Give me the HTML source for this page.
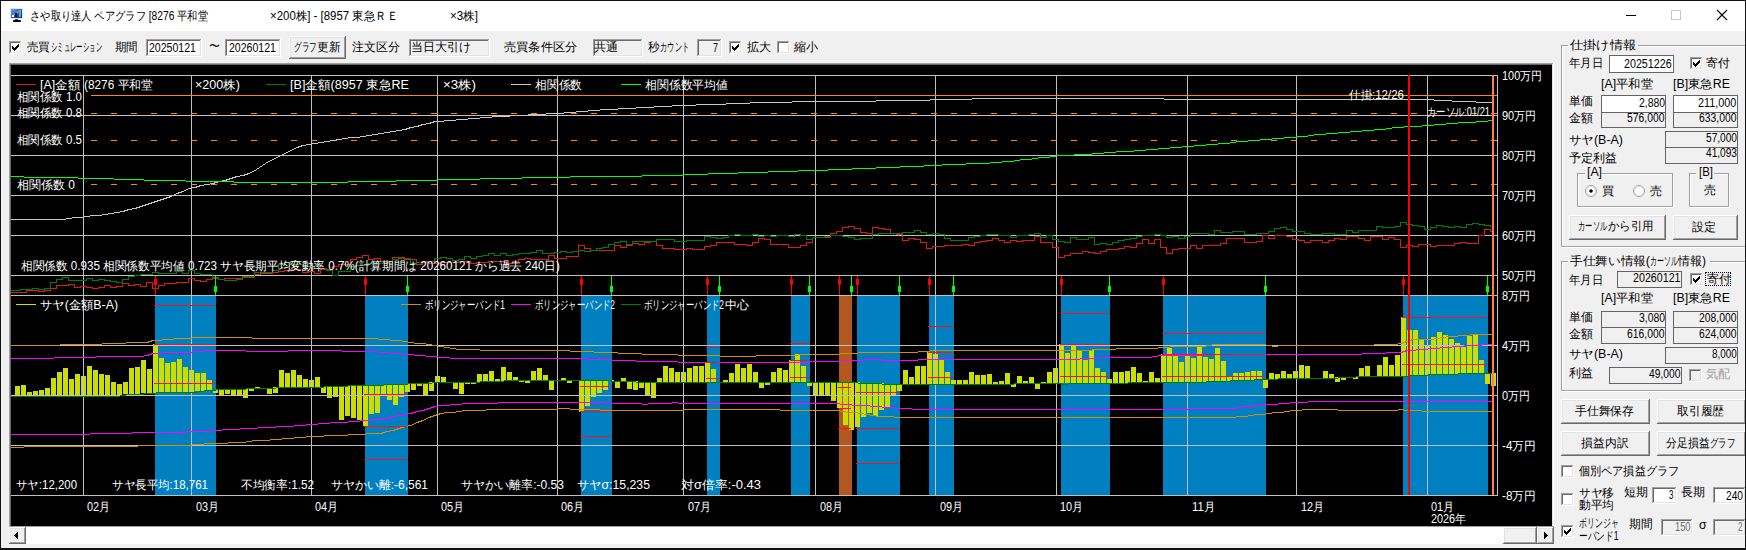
<!DOCTYPE html><html><head><meta charset="utf-8"><style>
html,body{margin:0;padding:0;width:1746px;height:550px;overflow:hidden;background:#f0f0f0}
.t{position:absolute;white-space:nowrap;font-family:"Liberation Sans",sans-serif;line-height:1;transform-origin:0 50%}
</style></head><body>
<div style="position:absolute;left:0px;top:0px;width:1746px;height:550px;background:#f0f0f0"></div>
<div style="position:absolute;left:1px;top:1px;width:1744px;height:30px;background:#fff"></div>
<div style="position:absolute;left:0px;top:0px;width:1746px;height:1px;background:#111"></div>
<div style="position:absolute;left:0px;top:0px;width:1px;height:550px;background:#111"></div>
<div style="position:absolute;left:1745px;top:0px;width:1px;height:550px;background:#111"></div>
<div style="position:absolute;left:0px;top:548px;width:1746px;height:2px;background:#111"></div>
<svg style="position:absolute;left:10px;top:8px" width="14" height="15" shape-rendering="crispEdges"><defs><linearGradient id="ig" x1="0" y1="0" x2="1" y2="1"><stop offset="0" stop-color="#5aa8ff"/><stop offset="1" stop-color="#0818a0"/></linearGradient></defs><rect x="0" y="0" width="13" height="11" fill="#e4e4e4"/><rect x="1" y="1" width="11" height="9" fill="url(#ig)"/><path d="M1.5 8.5L11 2" stroke="#f0a020" fill="none" shape-rendering="auto"/><rect x="2" y="7" width="2" height="2" fill="#fff"/><rect x="5" y="5" width="2" height="4" fill="#101830"/><rect x="9" y="2" width="2" height="7" fill="#40b8b0"/><rect x="5" y="11" width="3" height="1" fill="#555"/><rect x="3" y="12" width="8" height="2" rx="1" fill="#000" shape-rendering="auto"/></svg>
<div style="position:absolute;left:1626px;top:15px;width:10px;height:1px;background:#000"></div>
<div style="position:absolute;left:1671px;top:10px;width:10px;height:10px;border:1px solid #c8c8c8;box-sizing:border-box"></div>
<svg style="position:absolute;left:1716px;top:9px" width="12" height="12"><path d="M1 1L11 11M11 1L1 11" stroke="#000" stroke-width="1.1"/></svg>
<div style="position:absolute;left:9px;top:41px;width:13px;height:13px;background:#fff"></div>
<div style="position:absolute;left:9px;top:41px;width:12px;height:12px;background:#a0a0a0"></div>
<div style="position:absolute;left:10px;top:42px;width:11px;height:11px;background:#e3e3e3"></div>
<div style="position:absolute;left:10px;top:42px;width:10px;height:10px;background:#696969"></div>
<div style="position:absolute;left:11px;top:43px;width:9px;height:9px;background:#fff"></div>
<svg style="position:absolute;left:9px;top:41px" width="13" height="13" shape-rendering="crispEdges" fill="#000"><rect x="9" y="3" width="1" height="1"/><rect x="8" y="4" width="1" height="1"/><rect x="9" y="4" width="1" height="1"/><rect x="3" y="5" width="1" height="1"/><rect x="7" y="5" width="1" height="1"/><rect x="8" y="5" width="1" height="1"/><rect x="9" y="5" width="1" height="1"/><rect x="3" y="6" width="1" height="1"/><rect x="4" y="6" width="1" height="1"/><rect x="6" y="6" width="1" height="1"/><rect x="7" y="6" width="1" height="1"/><rect x="8" y="6" width="1" height="1"/><rect x="3" y="7" width="1" height="1"/><rect x="4" y="7" width="1" height="1"/><rect x="5" y="7" width="1" height="1"/><rect x="6" y="7" width="1" height="1"/><rect x="7" y="7" width="1" height="1"/><rect x="4" y="8" width="1" height="1"/><rect x="5" y="8" width="1" height="1"/><rect x="6" y="8" width="1" height="1"/><rect x="5" y="9" width="1" height="1"/></svg>
<div style="position:absolute;left:146px;top:39px;width:56px;height:18px;background:#fff"></div>
<div style="position:absolute;left:146px;top:39px;width:55px;height:17px;background:#a0a0a0"></div>
<div style="position:absolute;left:147px;top:40px;width:54px;height:16px;background:#e3e3e3"></div>
<div style="position:absolute;left:147px;top:40px;width:53px;height:15px;background:#696969"></div>
<div style="position:absolute;left:148px;top:41px;width:52px;height:14px;background:#fff"></div>
<div style="position:absolute;left:225px;top:39px;width:56px;height:18px;background:#fff"></div>
<div style="position:absolute;left:225px;top:39px;width:55px;height:17px;background:#a0a0a0"></div>
<div style="position:absolute;left:226px;top:40px;width:54px;height:16px;background:#e3e3e3"></div>
<div style="position:absolute;left:226px;top:40px;width:53px;height:15px;background:#696969"></div>
<div style="position:absolute;left:227px;top:41px;width:52px;height:14px;background:#fff"></div>
<div style="position:absolute;left:289px;top:36px;width:57px;height:23px;background:#696969"></div>
<div style="position:absolute;left:289px;top:36px;width:56px;height:22px;background:#fff"></div>
<div style="position:absolute;left:290px;top:37px;width:55px;height:21px;background:#a0a0a0"></div>
<div style="position:absolute;left:290px;top:37px;width:54px;height:20px;background:#e3e3e3"></div>
<div style="position:absolute;left:291px;top:38px;width:53px;height:19px;background:#f0f0f0"></div>
<div style="position:absolute;left:409px;top:39px;width:81px;height:18px;background:#fff"></div>
<div style="position:absolute;left:409px;top:39px;width:80px;height:17px;background:#a0a0a0"></div>
<div style="position:absolute;left:410px;top:40px;width:79px;height:16px;background:#e3e3e3"></div>
<div style="position:absolute;left:410px;top:40px;width:78px;height:15px;background:#696969"></div>
<div style="position:absolute;left:411px;top:41px;width:77px;height:14px;background:#f0f0f0"></div>
<div style="position:absolute;left:593px;top:39px;width:50px;height:18px;background:#fff"></div>
<div style="position:absolute;left:593px;top:39px;width:49px;height:17px;background:#a0a0a0"></div>
<div style="position:absolute;left:594px;top:40px;width:48px;height:16px;background:#e3e3e3"></div>
<div style="position:absolute;left:594px;top:40px;width:47px;height:15px;background:#696969"></div>
<div style="position:absolute;left:595px;top:41px;width:46px;height:14px;background:#f0f0f0"></div>
<div style="position:absolute;left:697px;top:39px;width:25px;height:18px;background:#fff"></div>
<div style="position:absolute;left:697px;top:39px;width:24px;height:17px;background:#a0a0a0"></div>
<div style="position:absolute;left:698px;top:40px;width:23px;height:16px;background:#e3e3e3"></div>
<div style="position:absolute;left:698px;top:40px;width:22px;height:15px;background:#696969"></div>
<div style="position:absolute;left:699px;top:41px;width:21px;height:14px;background:#f0f0f0"></div>
<div style="position:absolute;left:729px;top:41px;width:13px;height:13px;background:#fff"></div>
<div style="position:absolute;left:729px;top:41px;width:12px;height:12px;background:#a0a0a0"></div>
<div style="position:absolute;left:730px;top:42px;width:11px;height:11px;background:#e3e3e3"></div>
<div style="position:absolute;left:730px;top:42px;width:10px;height:10px;background:#696969"></div>
<div style="position:absolute;left:731px;top:43px;width:9px;height:9px;background:#fff"></div>
<svg style="position:absolute;left:729px;top:41px" width="13" height="13" shape-rendering="crispEdges" fill="#000"><rect x="9" y="3" width="1" height="1"/><rect x="8" y="4" width="1" height="1"/><rect x="9" y="4" width="1" height="1"/><rect x="3" y="5" width="1" height="1"/><rect x="7" y="5" width="1" height="1"/><rect x="8" y="5" width="1" height="1"/><rect x="9" y="5" width="1" height="1"/><rect x="3" y="6" width="1" height="1"/><rect x="4" y="6" width="1" height="1"/><rect x="6" y="6" width="1" height="1"/><rect x="7" y="6" width="1" height="1"/><rect x="8" y="6" width="1" height="1"/><rect x="3" y="7" width="1" height="1"/><rect x="4" y="7" width="1" height="1"/><rect x="5" y="7" width="1" height="1"/><rect x="6" y="7" width="1" height="1"/><rect x="7" y="7" width="1" height="1"/><rect x="4" y="8" width="1" height="1"/><rect x="5" y="8" width="1" height="1"/><rect x="6" y="8" width="1" height="1"/><rect x="5" y="9" width="1" height="1"/></svg>
<div style="position:absolute;left:777px;top:41px;width:13px;height:13px;background:#fff"></div>
<div style="position:absolute;left:777px;top:41px;width:12px;height:12px;background:#a0a0a0"></div>
<div style="position:absolute;left:778px;top:42px;width:11px;height:11px;background:#e3e3e3"></div>
<div style="position:absolute;left:778px;top:42px;width:10px;height:10px;background:#696969"></div>
<div style="position:absolute;left:779px;top:43px;width:9px;height:9px;background:#fff"></div>
<div style="position:absolute;left:9px;top:63px;width:1545px;height:465px;background:#fff"></div>
<div style="position:absolute;left:9px;top:63px;width:1544px;height:464px;background:#a0a0a0"></div>
<div style="position:absolute;left:10px;top:64px;width:1543px;height:463px;background:#e3e3e3"></div>
<div style="position:absolute;left:10px;top:64px;width:1542px;height:462px;background:#696969"></div>
<div style="position:absolute;left:11px;top:65px;width:1541px;height:461px;background:#000"></div>
<div style="position:absolute;left:9px;top:526px;width:1545px;height:18px;background:#fff"></div>
<div style="position:absolute;left:9px;top:526px;width:1545px;height:1px;background:#a0a0a0"></div>
<div style="position:absolute;left:9px;top:527px;width:1px;height:17px;background:#a0a0a0"></div>
<div style="position:absolute;left:9px;top:527px;width:17px;height:17px;background:#696969"></div>
<div style="position:absolute;left:9px;top:527px;width:16px;height:16px;background:#fff"></div>
<div style="position:absolute;left:10px;top:528px;width:15px;height:15px;background:#a0a0a0"></div>
<div style="position:absolute;left:10px;top:528px;width:14px;height:14px;background:#e3e3e3"></div>
<div style="position:absolute;left:11px;top:529px;width:13px;height:13px;background:#f0f0f0"></div>
<svg style="position:absolute;left:14px;top:532px" width="4" height="7" shape-rendering="crispEdges" fill="#000"><rect x="3" y="0" width="1" height="7"/><rect x="2" y="1" width="1" height="5"/><rect x="1" y="2" width="1" height="3"/><rect x="0" y="3" width="1" height="1"/></svg>
<div style="position:absolute;left:1503px;top:527px;width:34px;height:17px;background:#696969"></div>
<div style="position:absolute;left:1503px;top:527px;width:33px;height:16px;background:#fff"></div>
<div style="position:absolute;left:1504px;top:528px;width:32px;height:15px;background:#a0a0a0"></div>
<div style="position:absolute;left:1504px;top:528px;width:31px;height:14px;background:#e3e3e3"></div>
<div style="position:absolute;left:1505px;top:529px;width:30px;height:13px;background:#f0f0f0"></div>
<div style="position:absolute;left:1537px;top:527px;width:17px;height:17px;background:#696969"></div>
<div style="position:absolute;left:1537px;top:527px;width:16px;height:16px;background:#fff"></div>
<div style="position:absolute;left:1538px;top:528px;width:15px;height:15px;background:#a0a0a0"></div>
<div style="position:absolute;left:1538px;top:528px;width:14px;height:14px;background:#e3e3e3"></div>
<div style="position:absolute;left:1539px;top:529px;width:13px;height:13px;background:#f0f0f0"></div>
<svg style="position:absolute;left:1544px;top:532px" width="4" height="7" shape-rendering="crispEdges" fill="#000"><rect x="0" y="0" width="1" height="7"/><rect x="1" y="1" width="1" height="5"/><rect x="2" y="2" width="1" height="3"/><rect x="3" y="3" width="1" height="1"/></svg>
<div style="position:absolute;left:1561px;top:45px;width:183px;height:200px;border:1px solid #a0a0a0;box-shadow:1px 1px 0 #fff inset, 1px 1px 0 #fff"></div>
<div style="position:absolute;left:1568px;top:38px;width:70px;height:14px;background:#f0f0f0"></div>
<div style="position:absolute;left:1609px;top:55px;width:65px;height:18px;background:#fff;border:1px solid #646464;box-sizing:border-box"></div>
<div style="position:absolute;left:1690px;top:57px;width:13px;height:13px;background:#fff"></div>
<div style="position:absolute;left:1690px;top:57px;width:12px;height:12px;background:#a0a0a0"></div>
<div style="position:absolute;left:1691px;top:58px;width:11px;height:11px;background:#e3e3e3"></div>
<div style="position:absolute;left:1691px;top:58px;width:10px;height:10px;background:#696969"></div>
<div style="position:absolute;left:1692px;top:59px;width:9px;height:9px;background:#fff"></div>
<svg style="position:absolute;left:1690px;top:57px" width="13" height="13" shape-rendering="crispEdges" fill="#000"><rect x="9" y="3" width="1" height="1"/><rect x="8" y="4" width="1" height="1"/><rect x="9" y="4" width="1" height="1"/><rect x="3" y="5" width="1" height="1"/><rect x="7" y="5" width="1" height="1"/><rect x="8" y="5" width="1" height="1"/><rect x="9" y="5" width="1" height="1"/><rect x="3" y="6" width="1" height="1"/><rect x="4" y="6" width="1" height="1"/><rect x="6" y="6" width="1" height="1"/><rect x="7" y="6" width="1" height="1"/><rect x="8" y="6" width="1" height="1"/><rect x="3" y="7" width="1" height="1"/><rect x="4" y="7" width="1" height="1"/><rect x="5" y="7" width="1" height="1"/><rect x="6" y="7" width="1" height="1"/><rect x="7" y="7" width="1" height="1"/><rect x="4" y="8" width="1" height="1"/><rect x="5" y="8" width="1" height="1"/><rect x="6" y="8" width="1" height="1"/><rect x="5" y="9" width="1" height="1"/></svg>
<div style="position:absolute;left:1601px;top:95px;width:65px;height:18px;background:#fff;border:1px solid #646464;box-sizing:border-box"></div>
<div style="position:absolute;left:1601px;top:112px;width:65px;height:16px;background:#f0f0f0;border:1px solid #646464;box-sizing:border-box"></div>
<div style="position:absolute;left:1673px;top:95px;width:65px;height:18px;background:#fff;border:1px solid #646464;box-sizing:border-box"></div>
<div style="position:absolute;left:1673px;top:112px;width:65px;height:16px;background:#f0f0f0;border:1px solid #646464;box-sizing:border-box"></div>
<div style="position:absolute;left:1665px;top:131px;width:73px;height:17px;background:#f0f0f0;border:1px solid #646464;box-sizing:border-box"></div>
<div style="position:absolute;left:1665px;top:147px;width:73px;height:17px;background:#f0f0f0;border:1px solid #646464;box-sizing:border-box"></div>
<div style="position:absolute;left:1577px;top:173px;width:94px;height:32px;border:1px solid #a0a0a0;box-shadow:1px 1px 0 #fff inset, 1px 1px 0 #fff"></div>
<div style="position:absolute;left:1585px;top:167px;width:16px;height:12px;background:#f0f0f0"></div>
<div style="position:absolute;left:1689px;top:173px;width:38px;height:32px;border:1px solid #a0a0a0;box-shadow:1px 1px 0 #fff inset, 1px 1px 0 #fff"></div>
<div style="position:absolute;left:1696px;top:167px;width:18px;height:12px;background:#f0f0f0"></div>
<svg style="position:absolute;left:1585px;top:185px" width="13" height="13"><circle cx="6" cy="6" r="5.5" fill="#fff" stroke="#a0a0a0"/><circle cx="6" cy="6" r="4.5" fill="none" stroke="#e3e3e3" /><circle cx="6" cy="6" r="1.8" fill="#000"/></svg>
<svg style="position:absolute;left:1633px;top:185px" width="13" height="13"><circle cx="6" cy="6" r="5.5" fill="#fff" stroke="#a0a0a0"/><circle cx="6" cy="6" r="4.5" fill="none" stroke="#e3e3e3" /></svg>
<div style="position:absolute;left:1569px;top:215px;width:97px;height:25px;background:#696969"></div>
<div style="position:absolute;left:1569px;top:215px;width:96px;height:24px;background:#fff"></div>
<div style="position:absolute;left:1570px;top:216px;width:95px;height:23px;background:#a0a0a0"></div>
<div style="position:absolute;left:1570px;top:216px;width:94px;height:22px;background:#e3e3e3"></div>
<div style="position:absolute;left:1571px;top:217px;width:93px;height:21px;background:#f0f0f0"></div>
<div style="position:absolute;left:1673px;top:215px;width:65px;height:25px;background:#696969"></div>
<div style="position:absolute;left:1673px;top:215px;width:64px;height:24px;background:#fff"></div>
<div style="position:absolute;left:1674px;top:216px;width:63px;height:23px;background:#a0a0a0"></div>
<div style="position:absolute;left:1674px;top:216px;width:62px;height:22px;background:#e3e3e3"></div>
<div style="position:absolute;left:1675px;top:217px;width:61px;height:21px;background:#f0f0f0"></div>
<div style="position:absolute;left:1561px;top:261px;width:183px;height:128px;border:1px solid #a0a0a0;box-shadow:1px 1px 0 #fff inset, 1px 1px 0 #fff"></div>
<div style="position:absolute;left:1568px;top:254px;width:142px;height:14px;background:#f0f0f0"></div>
<div style="position:absolute;left:1617px;top:271px;width:65px;height:17px;background:#f0f0f0;border:1px solid #646464;box-sizing:border-box"></div>
<div style="position:absolute;left:1690px;top:273px;width:13px;height:13px;background:#fff"></div>
<div style="position:absolute;left:1690px;top:273px;width:12px;height:12px;background:#a0a0a0"></div>
<div style="position:absolute;left:1691px;top:274px;width:11px;height:11px;background:#e3e3e3"></div>
<div style="position:absolute;left:1691px;top:274px;width:10px;height:10px;background:#696969"></div>
<div style="position:absolute;left:1692px;top:275px;width:9px;height:9px;background:#fff"></div>
<svg style="position:absolute;left:1690px;top:273px" width="13" height="13" shape-rendering="crispEdges" fill="#000"><rect x="9" y="3" width="1" height="1"/><rect x="8" y="4" width="1" height="1"/><rect x="9" y="4" width="1" height="1"/><rect x="3" y="5" width="1" height="1"/><rect x="7" y="5" width="1" height="1"/><rect x="8" y="5" width="1" height="1"/><rect x="9" y="5" width="1" height="1"/><rect x="3" y="6" width="1" height="1"/><rect x="4" y="6" width="1" height="1"/><rect x="6" y="6" width="1" height="1"/><rect x="7" y="6" width="1" height="1"/><rect x="8" y="6" width="1" height="1"/><rect x="3" y="7" width="1" height="1"/><rect x="4" y="7" width="1" height="1"/><rect x="5" y="7" width="1" height="1"/><rect x="6" y="7" width="1" height="1"/><rect x="7" y="7" width="1" height="1"/><rect x="4" y="8" width="1" height="1"/><rect x="5" y="8" width="1" height="1"/><rect x="6" y="8" width="1" height="1"/><rect x="5" y="9" width="1" height="1"/></svg>
<div style="position:absolute;left:1705px;top:272px;width:26px;height:14px;border:1px dotted #000;box-sizing:border-box"></div>
<div style="position:absolute;left:1601px;top:311px;width:65px;height:17px;background:#f0f0f0;border:1px solid #646464;box-sizing:border-box"></div>
<div style="position:absolute;left:1601px;top:327px;width:65px;height:17px;background:#f0f0f0;border:1px solid #646464;box-sizing:border-box"></div>
<div style="position:absolute;left:1673px;top:311px;width:65px;height:17px;background:#f0f0f0;border:1px solid #646464;box-sizing:border-box"></div>
<div style="position:absolute;left:1673px;top:327px;width:65px;height:17px;background:#f0f0f0;border:1px solid #646464;box-sizing:border-box"></div>
<div style="position:absolute;left:1665px;top:347px;width:73px;height:17px;background:#f0f0f0;border:1px solid #646464;box-sizing:border-box"></div>
<div style="position:absolute;left:1609px;top:367px;width:73px;height:17px;background:#f0f0f0;border:1px solid #646464;box-sizing:border-box"></div>
<div style="position:absolute;left:1689px;top:369px;width:13px;height:13px;background:#fff"></div>
<div style="position:absolute;left:1689px;top:369px;width:12px;height:12px;background:#a0a0a0"></div>
<div style="position:absolute;left:1690px;top:370px;width:11px;height:11px;background:#e3e3e3"></div>
<div style="position:absolute;left:1690px;top:370px;width:10px;height:10px;background:#696969"></div>
<div style="position:absolute;left:1691px;top:371px;width:9px;height:9px;background:#f0f0f0"></div>
<div style="position:absolute;left:1561px;top:399px;width:89px;height:25px;background:#696969"></div>
<div style="position:absolute;left:1561px;top:399px;width:88px;height:24px;background:#fff"></div>
<div style="position:absolute;left:1562px;top:400px;width:87px;height:23px;background:#a0a0a0"></div>
<div style="position:absolute;left:1562px;top:400px;width:86px;height:22px;background:#e3e3e3"></div>
<div style="position:absolute;left:1563px;top:401px;width:85px;height:21px;background:#f0f0f0"></div>
<div style="position:absolute;left:1657px;top:399px;width:89px;height:25px;background:#696969"></div>
<div style="position:absolute;left:1657px;top:399px;width:88px;height:24px;background:#fff"></div>
<div style="position:absolute;left:1658px;top:400px;width:87px;height:23px;background:#a0a0a0"></div>
<div style="position:absolute;left:1658px;top:400px;width:86px;height:22px;background:#e3e3e3"></div>
<div style="position:absolute;left:1659px;top:401px;width:85px;height:21px;background:#f0f0f0"></div>
<div style="position:absolute;left:1561px;top:431px;width:89px;height:25px;background:#696969"></div>
<div style="position:absolute;left:1561px;top:431px;width:88px;height:24px;background:#fff"></div>
<div style="position:absolute;left:1562px;top:432px;width:87px;height:23px;background:#a0a0a0"></div>
<div style="position:absolute;left:1562px;top:432px;width:86px;height:22px;background:#e3e3e3"></div>
<div style="position:absolute;left:1563px;top:433px;width:85px;height:21px;background:#f0f0f0"></div>
<div style="position:absolute;left:1657px;top:431px;width:89px;height:25px;background:#696969"></div>
<div style="position:absolute;left:1657px;top:431px;width:88px;height:24px;background:#fff"></div>
<div style="position:absolute;left:1658px;top:432px;width:87px;height:23px;background:#a0a0a0"></div>
<div style="position:absolute;left:1658px;top:432px;width:86px;height:22px;background:#e3e3e3"></div>
<div style="position:absolute;left:1659px;top:433px;width:85px;height:21px;background:#f0f0f0"></div>
<div style="position:absolute;left:1561px;top:465px;width:13px;height:13px;background:#fff"></div>
<div style="position:absolute;left:1561px;top:465px;width:12px;height:12px;background:#a0a0a0"></div>
<div style="position:absolute;left:1562px;top:466px;width:11px;height:11px;background:#e3e3e3"></div>
<div style="position:absolute;left:1562px;top:466px;width:10px;height:10px;background:#696969"></div>
<div style="position:absolute;left:1563px;top:467px;width:9px;height:9px;background:#fff"></div>
<div style="position:absolute;left:1561px;top:493px;width:13px;height:13px;background:#fff"></div>
<div style="position:absolute;left:1561px;top:493px;width:12px;height:12px;background:#a0a0a0"></div>
<div style="position:absolute;left:1562px;top:494px;width:11px;height:11px;background:#e3e3e3"></div>
<div style="position:absolute;left:1562px;top:494px;width:10px;height:10px;background:#696969"></div>
<div style="position:absolute;left:1563px;top:495px;width:9px;height:9px;background:#fff"></div>
<div style="position:absolute;left:1652px;top:487px;width:25px;height:17px;background:#fff"></div>
<div style="position:absolute;left:1652px;top:487px;width:24px;height:16px;background:#a0a0a0"></div>
<div style="position:absolute;left:1653px;top:488px;width:23px;height:15px;background:#e3e3e3"></div>
<div style="position:absolute;left:1653px;top:488px;width:22px;height:14px;background:#696969"></div>
<div style="position:absolute;left:1654px;top:489px;width:21px;height:13px;background:#fff"></div>
<div style="position:absolute;left:1713px;top:487px;width:33px;height:17px;background:#fff"></div>
<div style="position:absolute;left:1713px;top:487px;width:32px;height:16px;background:#a0a0a0"></div>
<div style="position:absolute;left:1714px;top:488px;width:31px;height:15px;background:#e3e3e3"></div>
<div style="position:absolute;left:1714px;top:488px;width:30px;height:14px;background:#696969"></div>
<div style="position:absolute;left:1715px;top:489px;width:29px;height:13px;background:#fff"></div>
<div style="position:absolute;left:1561px;top:525px;width:13px;height:13px;background:#fff"></div>
<div style="position:absolute;left:1561px;top:525px;width:12px;height:12px;background:#a0a0a0"></div>
<div style="position:absolute;left:1562px;top:526px;width:11px;height:11px;background:#e3e3e3"></div>
<div style="position:absolute;left:1562px;top:526px;width:10px;height:10px;background:#696969"></div>
<div style="position:absolute;left:1563px;top:527px;width:9px;height:9px;background:#fff"></div>
<svg style="position:absolute;left:1561px;top:525px" width="13" height="13" shape-rendering="crispEdges" fill="#000"><rect x="9" y="3" width="1" height="1"/><rect x="8" y="4" width="1" height="1"/><rect x="9" y="4" width="1" height="1"/><rect x="3" y="5" width="1" height="1"/><rect x="7" y="5" width="1" height="1"/><rect x="8" y="5" width="1" height="1"/><rect x="9" y="5" width="1" height="1"/><rect x="3" y="6" width="1" height="1"/><rect x="4" y="6" width="1" height="1"/><rect x="6" y="6" width="1" height="1"/><rect x="7" y="6" width="1" height="1"/><rect x="8" y="6" width="1" height="1"/><rect x="3" y="7" width="1" height="1"/><rect x="4" y="7" width="1" height="1"/><rect x="5" y="7" width="1" height="1"/><rect x="6" y="7" width="1" height="1"/><rect x="7" y="7" width="1" height="1"/><rect x="4" y="8" width="1" height="1"/><rect x="5" y="8" width="1" height="1"/><rect x="6" y="8" width="1" height="1"/><rect x="5" y="9" width="1" height="1"/></svg>
<div style="position:absolute;left:1661px;top:519px;width:32px;height:17px;background:#fff"></div>
<div style="position:absolute;left:1661px;top:519px;width:31px;height:16px;background:#a0a0a0"></div>
<div style="position:absolute;left:1662px;top:520px;width:30px;height:15px;background:#e3e3e3"></div>
<div style="position:absolute;left:1662px;top:520px;width:29px;height:14px;background:#696969"></div>
<div style="position:absolute;left:1663px;top:521px;width:28px;height:13px;background:#f0f0f0"></div>
<div style="position:absolute;left:1713px;top:519px;width:33px;height:17px;background:#fff"></div>
<div style="position:absolute;left:1713px;top:519px;width:32px;height:16px;background:#a0a0a0"></div>
<div style="position:absolute;left:1714px;top:520px;width:31px;height:15px;background:#e3e3e3"></div>
<div style="position:absolute;left:1714px;top:520px;width:30px;height:14px;background:#696969"></div>
<div style="position:absolute;left:1715px;top:521px;width:29px;height:13px;background:#f0f0f0"></div>
<div style="position:absolute;left:1745px;top:0px;width:1px;height:550px;background:#111"></div>
<svg class="chart" width="1746" height="550" viewBox="0 0 1746 550" shape-rendering="crispEdges" style="position:absolute;left:0;top:0"><path d="M11 75.5H1498" stroke="#c0c0c0"/><path d="M11 115.5H1498" stroke="#c0c0c0"/><path d="M11 155.5H1498" stroke="#c0c0c0"/><path d="M11 195.5H1498" stroke="#c0c0c0"/><path d="M11 235.5H1498" stroke="#c0c0c0"/><path d="M11 275.5H1498" stroke="#c0c0c0"/><path d="M83.5 75V295" stroke="#c0c0c0"/><path d="M191.5 75V295" stroke="#c0c0c0"/><path d="M311.5 75V295" stroke="#c0c0c0"/><path d="M437.5 75V295" stroke="#c0c0c0"/><path d="M557.5 75V295" stroke="#c0c0c0"/><path d="M683.5 75V295" stroke="#c0c0c0"/><path d="M815.5 75V295" stroke="#c0c0c0"/><path d="M935.5 75V295" stroke="#c0c0c0"/><path d="M1056.5 75V295" stroke="#c0c0c0"/><path d="M1187.5 75V295" stroke="#c0c0c0"/><path d="M1296.5 75V295" stroke="#c0c0c0"/><path d="M1427.5 75V295" stroke="#c0c0c0"/><path d="M91 95.5H1497" stroke="#ff8c00"/><path d="M91 113.5H1497" stroke="#ff8c00" stroke-dasharray="6 14"/><path d="M91 140.5H1497" stroke="#ff8c00" stroke-dasharray="6 14"/><path d="M91 184.5H1497" stroke="#ff8c00" stroke-dasharray="6 14"/><path d="M11 219.5L15 219.5L21 219.5L27 219.5L33 219.5L39 219.5L45 219.5L51 219.5L57 219.5L63 219.5L69 218.5L75 217.5L81 217.5L87 216.5L93 215.5L99 215.5L105 214.5L111 213.5L117 212.5L123 211.5L129 209.5L135 208.5L141 206.5L147 204.5L153 202.5L159 200.5L165 198.5L171 196.5L177 193.5L183 191.5L189 188.5L195 187.5L201 185.5L207 184.5L213 183.5L219 181.5L225 180.5L231 178.5L237 176.5L243 175.5L249 173.5L255 170.5L261 166.5L267 162.5L273 159.5L279 156.5L285 153.5L291 150.5L297 147.5L303 145.5L309 144.5L315 143.5L321 142.5L327 141.5L333 140.5L339 139.5L345 138.5L351 137.5L357 137.5L363 136.5L369 135.5L375 134.5L381 133.5L387 132.5L393 131.5L399 130.5L405 129.5L411 127.5L417 126.5L423 124.5L429 123.5L435 121.5L441 121.5L447 120.5L453 120.5L459 119.5L465 119.5L471 118.5L477 118.5L483 117.5L489 117.5L495 116.5L501 116.5L507 116.5L513 115.5L519 115.5L525 115.5L531 114.5L537 114.5L543 114.5L549 113.5L555 113.5L561 113.5L567 112.5L573 112.5L579 111.5L585 111.5L591 110.5L597 110.5L603 109.5L609 109.5L615 109.5L621 108.5L627 108.5L633 108.5L639 107.5L645 107.5L651 107.5L657 106.5L663 106.5L669 106.5L675 105.5L681 105.5L687 105.5L693 105.5L699 104.5L705 104.5L711 104.5L717 104.5L723 104.5L729 103.5L735 103.5L741 103.5L747 103.5L753 102.5L759 102.5L765 102.5L771 102.5L777 102.5L783 102.5L789 102.5L795 101.5L801 101.5L807 101.5L813 101.5L819 101.5L825 101.5L831 101.5L837 101.5L843 101.5L849 101.5L855 101.5L861 101.5L867 101.5L873 101.5L879 100.5L885 100.5L891 100.5L897 100.5L903 100.5L909 100.5L915 100.5L921 100.5L927 100.5L933 99.5L939 99.5L945 99.5L951 99.5L957 99.5L963 99.5L969 99.5L975 98.5L981 98.5L987 98.5L993 98.5L999 98.5L1005 98.5L1011 98.5L1017 98.5L1023 98.5L1029 98.5L1035 98.5L1041 98.5L1047 98.5L1053 98.5L1059 98.5L1065 98.5L1071 98.5L1077 98.5L1083 98.5L1089 98.5L1095 98.5L1101 98.5L1107 98.5L1113 98.5L1119 98.5L1125 98.5L1131 98.5L1137 98.5L1143 98.5L1149 98.5L1155 98.5L1161 98.5L1167 99.5L1173 99.5L1179 99.5L1185 99.5L1191 99.5L1197 99.5L1203 99.5L1209 99.5L1215 99.5L1221 99.5L1227 99.5L1233 99.5L1239 99.5L1245 99.5L1251 99.5L1257 99.5L1263 99.5L1269 99.5L1275 99.5L1281 99.5L1287 99.5L1293 99.5L1299 99.5L1305 99.5L1311 99.5L1317 99.5L1323 99.5L1329 99.5L1335 99.5L1341 99.5L1347 99.5L1353 99.5L1359 99.5L1365 99.5L1371 99.5L1377 99.5L1383 99.5L1389 99.5L1395 99.5L1401 99.5L1407 99.5L1413 99.5L1419 99.5L1425 99.5L1431 99.5L1437 100.5L1443 100.5L1449 100.5L1455 101.5L1461 101.5L1467 101.5L1473 101.5L1479 102.5L1485 102.5L1491 102.5L1494 102.5" stroke="#c8c8c8" fill="none"/><path d="M11 176.5L15 176.5L21 176.5L27 177.5L33 177.5L39 177.5L45 177.5L51 177.5L57 177.5L63 177.5L69 177.5L75 177.5L81 178.5L87 178.5L93 178.5L99 178.5L105 178.5L111 178.5L117 179.5L123 179.5L129 179.5L135 179.5L141 179.5L147 180.5L153 180.5L159 180.5L165 180.5L171 180.5L177 180.5L183 180.5L189 181.5L195 181.5L201 181.5L207 181.5L213 181.5L219 181.5L225 181.5L231 181.5L237 182.5L243 182.5L249 182.5L255 182.5L261 182.5L267 182.5L273 182.5L279 182.5L285 182.5L291 182.5L297 182.5L303 182.5L309 182.5L315 182.5L321 182.5L327 182.5L333 182.5L339 182.5L345 182.5L351 181.5L357 181.5L363 181.5L369 181.5L375 181.5L381 181.5L387 181.5L393 181.5L399 180.5L405 180.5L411 180.5L417 180.5L423 180.5L429 180.5L435 180.5L441 179.5L447 179.5L453 179.5L459 179.5L465 179.5L471 179.5L477 179.5L483 178.5L489 178.5L495 178.5L501 178.5L507 178.5L513 178.5L519 178.5L525 177.5L531 177.5L537 177.5L543 177.5L549 177.5L555 177.5L561 177.5L567 177.5L573 176.5L579 176.5L585 176.5L591 176.5L597 176.5L603 176.5L609 176.5L615 176.5L621 176.5L627 176.5L633 176.5L639 176.5L645 175.5L651 175.5L657 175.5L663 175.5L669 175.5L675 175.5L681 175.5L687 174.5L693 174.5L699 174.5L705 174.5L711 173.5L717 173.5L723 173.5L729 173.5L735 173.5L741 172.5L747 172.5L753 172.5L759 172.5L765 172.5L771 171.5L777 171.5L783 171.5L789 171.5L795 171.5L801 170.5L807 170.5L813 170.5L819 170.5L825 170.5L831 169.5L837 169.5L843 169.5L849 169.5L855 168.5L861 168.5L867 168.5L873 168.5L879 167.5L885 167.5L891 167.5L897 167.5L903 166.5L909 166.5L915 166.5L921 166.5L927 165.5L933 165.5L939 165.5L945 164.5L951 164.5L957 164.5L963 164.5L969 163.5L975 163.5L981 163.5L987 163.5L993 162.5L999 162.5L1005 161.5L1011 161.5L1017 160.5L1023 159.5L1029 159.5L1035 158.5L1041 157.5L1047 157.5L1053 156.5L1059 155.5L1065 155.5L1071 155.5L1077 154.5L1083 154.5L1089 154.5L1095 153.5L1101 153.5L1107 152.5L1113 152.5L1119 151.5L1125 151.5L1131 151.5L1137 150.5L1143 150.5L1149 149.5L1155 149.5L1161 148.5L1167 148.5L1173 147.5L1179 147.5L1185 146.5L1191 146.5L1197 145.5L1203 145.5L1209 144.5L1215 144.5L1221 143.5L1227 143.5L1233 142.5L1239 141.5L1245 141.5L1251 140.5L1257 140.5L1263 139.5L1269 139.5L1275 138.5L1281 138.5L1287 137.5L1293 137.5L1299 136.5L1305 136.5L1311 135.5L1317 134.5L1323 134.5L1329 133.5L1335 133.5L1341 132.5L1347 132.5L1353 131.5L1359 131.5L1365 130.5L1371 130.5L1377 129.5L1383 129.5L1389 128.5L1395 127.5L1401 127.5L1407 126.5L1413 126.5L1419 126.5L1425 125.5L1431 125.5L1437 124.5L1443 124.5L1449 123.5L1455 123.5L1461 122.5L1467 122.5L1473 122.5L1479 121.5L1485 121.5L1491 120.5L1494 120.5" stroke="#00ff00" fill="none"/><path d="M11 292.5H26V290.5H38V291.5H44V290.5H50V288.5H56V285.5H68V284.5H74V287.5H80V286.5H86V287.5H92V288.5H98V287.5H104V285.5H110V287.5H116V286.5H122V283.5H128V285.5H134V284.5H140V286.5H146V282.5H152V288.5H158V285.5H164V283.5H176V282.5H188V278.5H194V280.5H200V281.5H206V279.5H212V278.5H218V279.5H224V278.5H242V276.5H248V277.5H254V274.5H260V273.5H272V272.5H278V271.5H284V270.5H290V269.5H302V272.5H308V271.5H314V273.5H320V269.5H332V266.5H338V264.5H350V259.5H356V257.5H362V255.5H368V259.5H374V258.5H380V261.5H392V257.5H404V259.5H410V259.5H416V264.5H422V262.5H428V263.5H440V262.5H458V261.5H470V263.5H476V262.5H488V261.5H506V263.5H512V261.5H518V259.5H524V258.5H530V259.5H548V255.5H554V258.5H566V256.5H578V245.5H584V248.5H590V250.5H614V245.5H620V247.5H626V245.5H632V243.5H638V244.5H644V242.5H650V241.5H656V245.5H662V248.5H674V249.5H686V248.5H692V249.5H704V246.5H710V245.5H716V242.5H734V244.5H746V245.5H752V242.5H758V238.5H764V239.5H770V244.5H788V247.5H800V245.5H806V242.5H812V237.5H830V233.5H836V231.5H842V227.5H848V226.5H854V228.5H860V232.5H866V233.5H872V227.5H878V228.5H884V229.5H890V233.5H896V234.5H902V240.5H908V238.5H914V239.5H920V242.5H926V248.5H932V246.5H944V245.5H962V244.5H968V245.5H974V242.5H980V241.5H986V240.5H992V238.5H998V240.5H1004V242.5H1010V240.5H1016V241.5H1022V240.5H1034V236.5H1040V242.5H1052V247.5H1058V257.5H1064V255.5H1070V253.5H1082V251.5H1088V252.5H1094V253.5H1100V251.5H1106V249.5H1118V248.5H1124V246.5H1130V247.5H1136V243.5H1142V239.5H1148V243.5H1154V239.5H1160V247.5H1166V253.5H1172V249.5H1178V248.5H1190V245.5H1196V248.5H1202V245.5H1220V243.5H1226V238.5H1244V242.5H1256V241.5H1262V235.5H1268V238.5H1274V235.5H1286V236.5H1292V239.5H1298V240.5H1304V242.5H1310V240.5H1322V242.5H1328V240.5H1334V238.5H1340V239.5H1346V236.5H1358V238.5H1364V240.5H1370V236.5H1382V239.5H1388V237.5H1394V239.5H1400V247.5H1406V245.5H1412V246.5H1418V244.5H1430V246.5H1436V245.5H1454V243.5H1460V242.5H1466V243.5H1478V235.5H1484V229.5H1490V231.5H1494" stroke="#e01818" fill="none"/><path d="M11 290.5H20V289.5H32V288.5H38V289.5H44V288.5H50V282.5H56V279.5H62V277.5H68V280.5H86V278.5H92V280.5H98V279.5H104V280.5H110V281.5H116V282.5H122V279.5H128V276.5H134V275.5H140V274.5H152V272.5H158V273.5H176V271.5H182V273.5H188V270.5H194V273.5H200V274.5H212V277.5H218V279.5H224V280.5H230V280.5H236V279.5H242V277.5H248V276.5H254V272.5H266V272.5H272V270.5H278V264.5H284V262.5H290V264.5H302V266.5H314V268.5H326V270.5H332V275.5H338V271.5H350V266.5H356V265.5H368V263.5H392V259.5H398V258.5H410V263.5H416V262.5H422V261.5H434V258.5H440V257.5H446V258.5H452V260.5H458V259.5H464V256.5H470V258.5H476V256.5H482V255.5H488V253.5H494V255.5H500V253.5H506V255.5H512V254.5H518V253.5H530V252.5H536V250.5H542V253.5H554V252.5H560V251.5H566V252.5H572V251.5H578V250.5H584V251.5H590V250.5H596V248.5H602V247.5H608V244.5H614V242.5H620V241.5H626V244.5H632V241.5H656V239.5H674V241.5H686V240.5H704V236.5H710V237.5H716V238.5H722V237.5H728V235.5H734V234.5H740V235.5H752V234.5H758V236.5H764V235.5H770V236.5H776V235.5H788V236.5H794V234.5H800V235.5H806V239.5H812V237.5H824V236.5H830V235.5H842V236.5H848V237.5H854V239.5H860V238.5H872V234.5H878V233.5H902V232.5H914V230.5H920V232.5H926V234.5H932V233.5H938V234.5H944V238.5H950V240.5H968V237.5H974V236.5H980V235.5H986V234.5H998V235.5H1010V237.5H1016V235.5H1028V234.5H1034V233.5H1040V237.5H1046V235.5H1052V239.5H1058V241.5H1064V242.5H1070V237.5H1076V239.5H1088V237.5H1094V244.5H1100V243.5H1106V244.5H1112V242.5H1118V240.5H1124V239.5H1130V238.5H1136V236.5H1142V235.5H1154V234.5H1160V235.5H1166V237.5H1172V236.5H1178V238.5H1184V236.5H1190V233.5H1208V234.5H1214V230.5H1220V232.5H1232V231.5H1244V234.5H1256V233.5H1268V231.5H1274V228.5H1280V227.5H1286V229.5H1292V231.5H1304V233.5H1310V234.5H1322V233.5H1334V234.5H1346V230.5H1352V232.5H1358V230.5H1376V226.5H1382V227.5H1394V226.5H1400V222.5H1406V224.5H1412V225.5H1418V226.5H1424V229.5H1430V227.5H1436V225.5H1442V226.5H1448V227.5H1454V226.5H1460V227.5H1466V224.5H1472V223.5H1478V224.5H1484V225.5H1490V226.5H1494" stroke="#008000" fill="none"/><rect x="155" y="296" width="61" height="199" fill="#0080c0"/><rect x="365" y="296" width="43" height="199" fill="#0080c0"/><rect x="581" y="296" width="31" height="199" fill="#0080c0"/><rect x="707" y="296" width="13" height="199" fill="#0080c0"/><rect x="791" y="296" width="19" height="199" fill="#0080c0"/><rect x="839" y="296" width="13" height="199" fill="#b05820"/><rect x="857" y="296" width="43" height="199" fill="#0080c0"/><rect x="929" y="296" width="25" height="199" fill="#0080c0"/><rect x="1061" y="296" width="49" height="199" fill="#0080c0"/><rect x="1163" y="296" width="103" height="199" fill="#0080c0"/><rect x="1403" y="296" width="85" height="199" fill="#0080c0"/><path d="M15 386h5V396h-5zM21 385h5V396h-5zM27 392h5V396h-5zM33 391h5V396h-5zM39 390h5V396h-5zM45 388h5V396h-5zM51 378h5V396h-5zM57 372h5V396h-5zM63 368h5V396h-5zM69 379h5V396h-5zM75 374h5V396h-5zM81 376h5V396h-5zM87 366h5V396h-5zM93 370h5V396h-5zM99 374h5V396h-5zM105 375h5V396h-5zM111 382h5V396h-5zM117 384h5V396h-5zM123 382h5V394h-5zM129 368h5V394h-5zM135 367h5V394h-5zM141 360h5V393h-5zM147 369h5V393h-5zM153 344h5V393h-5zM159 358h5V392h-5zM165 363h5V392h-5zM171 362h5V392h-5zM177 359h5V392h-5zM183 367h5V392h-5zM189 370h5V392h-5zM195 373h5V391h-5zM201 373h5V391h-5zM207 380h5V390h-5zM213 390h5V393h-5zM219 389h5V396h-5zM225 389h5V394h-5zM231 389h5V396h-5zM237 389h5V395h-5zM243 389h5V398h-5zM249 388h5V391h-5zM255 387h5V388h-5zM267 388h5V394h-5zM273 387h5V393h-5zM279 370h5V387h-5zM285 373h5V387h-5zM291 370h5V387h-5zM297 375h5V387h-5zM303 379h5V387h-5zM309 380h5V387h-5zM315 377h5V387h-5zM321 387h5V393h-5zM327 386h5V398h-5zM333 386h5V397h-5zM339 386h5V420h-5zM345 386h5V416h-5zM351 385h5V418h-5zM357 385h5V420h-5zM363 385h5V426h-5zM369 385h5V414h-5zM375 385h5V413h-5zM381 385h5V394h-5zM387 384h5V400h-5zM393 384h5V405h-5zM399 384h5V397h-5zM405 384h5V392h-5zM411 383h5V390h-5zM417 383h5V386h-5zM423 383h5V395h-5zM429 382h5V391h-5zM435 376h5V382h-5zM441 377h5V382h-5zM447 382h5V383h-5zM453 382h5V389h-5zM459 382h5V394h-5zM465 382h5V384h-5zM471 382h5V384h-5zM477 374h5V382h-5zM483 374h5V381h-5zM489 371h5V381h-5zM495 379h5V381h-5zM501 367h5V381h-5zM507 372h5V380h-5zM513 377h5V380h-5zM519 380h5V382h-5zM525 380h5V383h-5zM531 371h5V380h-5zM537 368h5V380h-5zM543 375h5V380h-5zM549 380h5V390h-5zM561 378h5V380h-5zM567 380h5V383h-5zM579 380h5V412h-5zM585 380h5V406h-5zM591 380h5V397h-5zM597 380h5V393h-5zM603 380h5V390h-5zM609 380h5V381h-5zM615 381h5V388h-5zM621 378h5V381h-5zM627 381h5V389h-5zM633 381h5V390h-5zM639 382h5V388h-5zM645 382h5V395h-5zM651 382h5V398h-5zM657 378h5V382h-5zM663 366h5V382h-5zM669 368h5V382h-5zM675 372h5V382h-5zM681 372h5V382h-5zM687 368h5V382h-5zM693 366h5V382h-5zM699 366h5V382h-5zM705 363h5V382h-5zM711 369h5V382h-5zM723 380h5V382h-5zM729 373h5V382h-5zM735 364h5V382h-5zM741 368h5V382h-5zM747 364h5V382h-5zM753 372h5V382h-5zM759 382h5V388h-5zM765 382h5V385h-5zM771 372h5V382h-5zM777 368h5V382h-5zM783 370h5V382h-5zM789 360h5V382h-5zM795 354h5V382h-5zM801 366h5V382h-5zM807 382h5V386h-5zM813 382h5V395h-5zM819 382h5V395h-5zM825 382h5V395h-5zM831 382h5V401h-5zM837 382h5V408h-5zM843 382h5V425h-5zM849 382h5V430h-5zM855 382h5V427h-5zM861 383h5V417h-5zM867 383h5V413h-5zM873 383h5V416h-5zM879 383h5V410h-5zM885 384h5V408h-5zM891 384h5V395h-5zM897 384h5V391h-5zM903 370h5V384h-5zM909 377h5V384h-5zM915 366h5V384h-5zM921 366h5V384h-5zM927 352h5V384h-5zM933 354h5V384h-5zM939 359h5V384h-5zM945 372h5V384h-5zM951 380h5V384h-5zM957 380h5V384h-5zM963 380h5V384h-5zM969 372h5V384h-5zM975 375h5V384h-5zM981 375h5V384h-5zM987 374h5V384h-5zM993 382h5V384h-5zM999 381h5V384h-5zM1005 373h5V384h-5zM1011 384h5V387h-5zM1017 376h5V383h-5zM1023 381h5V383h-5zM1029 377h5V383h-5zM1035 383h5V389h-5zM1041 382h5V383h-5zM1047 372h5V383h-5zM1053 368h5V383h-5zM1059 344h5V383h-5zM1065 353h5V383h-5zM1071 346h5V383h-5zM1077 350h5V383h-5zM1083 360h5V383h-5zM1089 350h5V383h-5zM1095 368h5V383h-5zM1101 372h5V383h-5zM1107 379h5V383h-5zM1113 372h5V383h-5zM1119 372h5V383h-5zM1125 371h5V383h-5zM1131 367h5V382h-5zM1137 373h5V382h-5zM1143 381h5V382h-5zM1149 372h5V382h-5zM1155 378h5V382h-5zM1161 354h5V382h-5zM1167 348h5V382h-5zM1173 356h5V382h-5zM1179 362h5V382h-5zM1185 356h5V382h-5zM1191 358h5V382h-5zM1197 346h5V382h-5zM1203 357h5V382h-5zM1209 359h5V381h-5zM1215 348h5V381h-5zM1221 361h5V381h-5zM1227 377h5V381h-5zM1233 373h5V380h-5zM1239 373h5V380h-5zM1245 372h5V380h-5zM1251 371h5V380h-5zM1257 371h5V379h-5zM1263 379h5V388h-5zM1269 373h5V379h-5zM1275 374h5V379h-5zM1281 371h5V378h-5zM1287 374h5V378h-5zM1293 371h5V378h-5zM1299 365h5V378h-5zM1305 366h5V378h-5zM1323 371h5V378h-5zM1329 374h5V378h-5zM1335 377h5V382h-5zM1341 377h5V380h-5zM1347 377h5V378h-5zM1353 377h5V379h-5zM1359 368h5V376h-5zM1365 366h5V376h-5zM1377 365h5V376h-5zM1383 357h5V376h-5zM1389 365h5V376h-5zM1395 355h5V376h-5zM1401 317h5V376h-5zM1407 330h5V376h-5zM1413 330h5V375h-5zM1419 340h5V375h-5zM1425 346h5V375h-5zM1431 337h5V374h-5zM1437 332h5V374h-5zM1443 335h5V374h-5zM1449 339h5V374h-5zM1455 343h5V374h-5zM1461 347h5V373h-5zM1467 336h5V373h-5zM1473 334h5V373h-5zM1479 360h5V373h-5zM1485 373h5V384h-5zM1491 373h5V386h-5z" fill="#ccdd00"/><path d="M11 295.5H1498" stroke="#c0c0c0"/><path d="M11 345.5H1498" stroke="#c0c0c0"/><path d="M11 395.5H1498" stroke="#c0c0c0"/><path d="M11 445.5H1498" stroke="#c0c0c0"/><path d="M11 495.5H1498" stroke="#c0c0c0"/><path d="M83.5 295V495" stroke="#c0c0c0"/><path d="M191.5 295V495" stroke="#c0c0c0"/><path d="M311.5 295V495" stroke="#c0c0c0"/><path d="M437.5 295V495" stroke="#c0c0c0"/><path d="M557.5 295V495" stroke="#c0c0c0"/><path d="M683.5 295V495" stroke="#c0c0c0"/><path d="M815.5 295V495" stroke="#c0c0c0"/><path d="M935.5 295V495" stroke="#c0c0c0"/><path d="M1056.5 295V495" stroke="#c0c0c0"/><path d="M1187.5 295V495" stroke="#c0c0c0"/><path d="M1296.5 295V495" stroke="#c0c0c0"/><path d="M1427.5 295V495" stroke="#c0c0c0"/><path d="M1497.5 75V496" stroke="#c0c0c0"/><path d="M11 345.5L15 345.5L21 345.5L27 345.5L33 345.5L39 345.5L45 345.5L51 345.5L57 345.5L63 344.5L69 344.5L75 344.5L81 344.5L87 344.5L93 344.5L99 344.5L105 343.5L111 343.5L117 343.5L123 343.5L129 342.5L135 342.5L141 342.5L147 342.5L153 340.5L159 340.5L165 339.5L171 339.5L177 338.5L183 338.5L189 338.5L195 337.5L201 337.5L207 337.5L213 337.5L219 337.5L225 337.5L231 337.5L237 337.5L243 337.5L249 337.5L255 338.5L261 338.5L267 338.5L273 338.5L279 338.5L285 338.5L291 338.5L297 338.5L303 338.5L309 338.5L315 338.5L321 338.5L327 338.5L333 338.5L339 338.5L345 338.5L351 338.5L357 338.5L363 338.5L369 338.5L375 338.5L381 339.5L387 339.5L393 340.5L399 340.5L405 341.5L411 342.5L417 343.5L423 343.5L429 344.5L435 345.5L441 346.5L447 347.5L453 348.5L459 349.5L465 349.5L471 349.5L477 349.5L483 350.5L489 350.5L495 350.5L501 350.5L507 350.5L513 350.5L519 350.5L525 350.5L531 350.5L537 350.5L543 350.5L549 350.5L555 350.5L561 350.5L567 350.5L573 351.5L579 351.5L585 351.5L591 351.5L597 352.5L603 352.5L609 352.5L615 352.5L621 353.5L627 353.5L633 353.5L639 353.5L645 354.5L651 354.5L657 354.5L663 354.5L669 354.5L675 354.5L681 355.5L687 355.5L693 355.5L699 355.5L705 355.5L711 355.5L717 355.5L723 356.5L729 356.5L735 356.5L741 356.5L747 356.5L753 356.5L759 355.5L765 355.5L771 355.5L777 355.5L783 355.5L789 355.5L795 355.5L801 354.5L807 354.5L813 354.5L819 354.5L825 354.5L831 354.5L837 354.5L843 353.5L849 353.5L855 353.5L861 352.5L867 352.5L873 352.5L879 352.5L885 352.5L891 352.5L897 352.5L903 352.5L909 352.5L915 352.5L921 351.5L927 351.5L933 350.5L939 350.5L945 350.5L951 350.5L957 350.5L963 350.5L969 350.5L975 350.5L981 350.5L987 350.5L993 350.5L999 350.5L1005 350.5L1011 350.5L1017 350.5L1023 350.5L1029 350.5L1035 350.5L1041 350.5L1047 350.5L1053 350.5L1059 350.5L1065 350.5L1071 350.5L1077 350.5L1083 350.5L1089 350.5L1095 349.5L1101 349.5L1107 349.5L1113 349.5L1119 348.5L1125 348.5L1131 348.5L1137 348.5L1143 348.5L1149 348.5L1155 348.5L1161 347.5L1167 347.5L1173 346.5L1179 346.5L1185 346.5L1191 346.5L1197 346.5L1203 346.5L1209 345.5L1215 344.5L1221 344.5L1227 344.5L1233 344.5L1239 344.5L1245 344.5L1251 344.5L1257 344.5L1263 344.5L1269 345.5L1275 346.5L1281 345.5L1287 345.5L1293 345.5L1299 345.5L1305 345.5L1311 345.5L1317 345.5L1323 345.5L1329 345.5L1335 345.5L1341 345.5L1347 345.5L1353 345.5L1359 345.5L1365 345.5L1371 345.5L1377 344.5L1383 344.5L1389 344.5L1395 344.5L1401 343.5L1407 341.5L1413 339.5L1419 339.5L1425 339.5L1431 339.5L1437 338.5L1443 337.5L1449 336.5L1455 336.5L1461 335.5L1467 335.5L1473 334.5L1479 334.5L1485 334.5L1491 334.5L1494 334.5" stroke="#d09000" fill="none"/><path d="M11 447.5L15 447.5L21 447.5L27 446.5L33 446.5L39 446.5L45 446.5L51 446.5L57 446.5L63 446.5L69 446.5L75 446.5L81 446.5L87 446.5L93 446.5L99 446.5L105 446.5L111 446.5L117 446.5L123 446.5L129 446.5L135 446.5L141 445.5L147 445.5L153 445.5L159 445.5L165 445.5L171 445.5L177 445.5L183 445.5L189 445.5L195 444.5L201 444.5L207 443.5L213 443.5L219 443.5L225 443.5L231 442.5L237 442.5L243 442.5L249 441.5L255 440.5L261 440.5L267 440.5L273 439.5L279 439.5L285 438.5L291 438.5L297 437.5L303 437.5L309 436.5L315 436.5L321 436.5L327 435.5L333 435.5L339 435.5L345 435.5L351 434.5L357 434.5L363 434.5L369 433.5L375 433.5L381 433.5L387 431.5L393 430.5L399 428.5L405 426.5L411 425.5L417 422.5L423 420.5L429 417.5L435 415.5L441 413.5L447 412.5L453 412.5L459 411.5L465 410.5L471 410.5L477 410.5L483 410.5L489 409.5L495 409.5L501 409.5L507 409.5L513 409.5L519 409.5L525 409.5L531 409.5L537 409.5L543 409.5L549 409.5L555 409.5L561 408.5L567 408.5L573 409.5L579 409.5L585 409.5L591 409.5L597 409.5L603 410.5L609 410.5L615 410.5L621 410.5L627 410.5L633 410.5L639 410.5L645 410.5L651 410.5L657 410.5L663 410.5L669 410.5L675 410.5L681 410.5L687 409.5L693 409.5L699 409.5L705 409.5L711 409.5L717 409.5L723 409.5L729 409.5L735 409.5L741 409.5L747 409.5L753 409.5L759 409.5L765 409.5L771 409.5L777 409.5L783 410.5L789 410.5L795 410.5L801 410.5L807 410.5L813 410.5L819 410.5L825 410.5L831 410.5L837 410.5L843 411.5L849 412.5L855 412.5L861 413.5L867 414.5L873 415.5L879 416.5L885 416.5L891 416.5L897 417.5L903 417.5L909 417.5L915 417.5L921 417.5L927 417.5L933 417.5L939 417.5L945 417.5L951 417.5L957 417.5L963 417.5L969 417.5L975 417.5L981 417.5L987 417.5L993 417.5L999 417.5L1005 417.5L1011 417.5L1017 417.5L1023 417.5L1029 417.5L1035 417.5L1041 417.5L1047 417.5L1053 417.5L1059 417.5L1065 417.5L1071 417.5L1077 417.5L1083 417.5L1089 417.5L1095 417.5L1101 417.5L1107 417.5L1113 417.5L1119 417.5L1125 417.5L1131 417.5L1137 417.5L1143 417.5L1149 417.5L1155 417.5L1161 417.5L1167 417.5L1173 417.5L1179 417.5L1185 417.5L1191 417.5L1197 417.5L1203 417.5L1209 417.5L1215 417.5L1221 417.5L1227 417.5L1233 417.5L1239 416.5L1245 416.5L1251 415.5L1257 414.5L1263 414.5L1269 413.5L1275 412.5L1281 412.5L1287 411.5L1293 410.5L1299 410.5L1305 409.5L1311 409.5L1317 409.5L1323 409.5L1329 409.5L1335 409.5L1341 410.5L1347 410.5L1353 410.5L1359 410.5L1365 410.5L1371 410.5L1377 410.5L1383 410.5L1389 410.5L1395 410.5L1401 409.5L1407 410.5L1413 410.5L1419 410.5L1425 411.5L1431 411.5L1437 411.5L1443 411.5L1449 411.5L1455 411.5L1461 411.5L1467 411.5L1473 411.5L1479 411.5L1485 411.5L1491 411.5L1494 410.5" stroke="#d09000" fill="none"/><path d="M11 358.5L15 358.5L21 358.5L27 358.5L33 358.5L39 358.5L45 358.5L51 358.5L57 357.5L63 357.5L69 357.5L75 357.5L81 357.5L87 357.5L93 357.5L99 356.5L105 356.5L111 356.5L117 356.5L123 356.5L129 356.5L135 356.5L141 356.5L147 355.5L153 353.5L159 353.5L165 352.5L171 352.5L177 352.5L183 352.5L189 352.5L195 351.5L201 351.5L207 350.5L213 350.5L219 350.5L225 350.5L231 350.5L237 350.5L243 350.5L249 351.5L255 351.5L261 351.5L267 351.5L273 351.5L279 351.5L285 351.5L291 350.5L297 350.5L303 350.5L309 350.5L315 350.5L321 350.5L327 350.5L333 350.5L339 350.5L345 351.5L351 351.5L357 351.5L363 351.5L369 351.5L375 351.5L381 352.5L387 352.5L393 353.5L399 353.5L405 354.5L411 354.5L417 355.5L423 355.5L429 356.5L435 356.5L441 357.5L447 357.5L453 358.5L459 358.5L465 358.5L471 358.5L477 358.5L483 358.5L489 358.5L495 358.5L501 358.5L507 358.5L513 358.5L519 358.5L525 358.5L531 358.5L537 358.5L543 358.5L549 358.5L555 358.5L561 358.5L567 358.5L573 358.5L579 358.5L585 358.5L591 359.5L597 359.5L603 359.5L609 359.5L615 360.5L621 360.5L627 360.5L633 360.5L639 361.5L645 361.5L651 361.5L657 361.5L663 361.5L669 361.5L675 361.5L681 362.5L687 362.5L693 362.5L699 362.5L705 362.5L711 362.5L717 362.5L723 362.5L729 362.5L735 362.5L741 362.5L747 362.5L753 362.5L759 362.5L765 362.5L771 362.5L777 362.5L783 362.5L789 362.5L795 362.5L801 362.5L807 362.5L813 361.5L819 361.5L825 361.5L831 361.5L837 361.5L843 360.5L849 360.5L855 360.5L861 360.5L867 359.5L873 359.5L879 359.5L885 360.5L891 360.5L897 360.5L903 360.5L909 360.5L915 360.5L921 359.5L927 359.5L933 359.5L939 359.5L945 359.5L951 359.5L957 359.5L963 359.5L969 359.5L975 359.5L981 359.5L987 359.5L993 359.5L999 359.5L1005 359.5L1011 359.5L1017 359.5L1023 359.5L1029 359.5L1035 359.5L1041 359.5L1047 359.5L1053 359.5L1059 359.5L1065 359.5L1071 359.5L1077 359.5L1083 358.5L1089 358.5L1095 358.5L1101 357.5L1107 357.5L1113 357.5L1119 357.5L1125 357.5L1131 357.5L1137 357.5L1143 357.5L1149 357.5L1155 356.5L1161 355.5L1167 355.5L1173 355.5L1179 355.5L1185 355.5L1191 355.5L1197 355.5L1203 355.5L1209 354.5L1215 354.5L1221 354.5L1227 354.5L1233 354.5L1239 354.5L1245 354.5L1251 354.5L1257 354.5L1263 354.5L1269 354.5L1275 354.5L1281 354.5L1287 354.5L1293 354.5L1299 354.5L1305 354.5L1311 354.5L1317 354.5L1323 354.5L1329 354.5L1335 354.5L1341 354.5L1347 354.5L1353 354.5L1359 354.5L1365 353.5L1371 353.5L1377 353.5L1383 353.5L1389 352.5L1395 352.5L1401 352.5L1407 350.5L1413 350.5L1419 349.5L1425 349.5L1431 348.5L1437 348.5L1443 347.5L1449 347.5L1455 346.5L1461 346.5L1467 345.5L1473 345.5L1479 345.5L1485 344.5L1491 344.5L1494 344.5" stroke="#ff00ff" fill="none"/><path d="M11 434.5L15 434.5L21 434.5L27 434.5L33 434.5L39 434.5L45 434.5L51 434.5L57 434.5L63 434.5L69 434.5L75 434.5L81 434.5L87 434.5L93 433.5L99 433.5L105 433.5L111 433.5L117 433.5L123 433.5L129 433.5L135 432.5L141 432.5L147 432.5L153 432.5L159 432.5L165 432.5L171 432.5L177 432.5L183 432.5L189 431.5L195 431.5L201 431.5L207 431.5L213 430.5L219 430.5L225 429.5L231 429.5L237 429.5L243 428.5L249 428.5L255 428.5L261 427.5L267 427.5L273 427.5L279 426.5L285 426.5L291 426.5L297 425.5L303 425.5L309 424.5L315 424.5L321 423.5L327 423.5L333 422.5L339 422.5L345 422.5L351 421.5L357 421.5L363 420.5L369 420.5L375 419.5L381 419.5L387 418.5L393 416.5L399 415.5L405 414.5L411 413.5L417 411.5L423 410.5L429 408.5L435 406.5L441 405.5L447 405.5L453 404.5L459 404.5L465 403.5L471 403.5L477 403.5L483 403.5L489 403.5L495 403.5L501 402.5L507 402.5L513 402.5L519 402.5L525 402.5L531 402.5L537 402.5L543 402.5L549 402.5L555 402.5L561 402.5L567 402.5L573 402.5L579 402.5L585 402.5L591 402.5L597 402.5L603 402.5L609 403.5L615 403.5L621 403.5L627 403.5L633 403.5L639 403.5L645 404.5L651 403.5L657 403.5L663 403.5L669 403.5L675 402.5L681 403.5L687 403.5L693 403.5L699 403.5L705 403.5L711 403.5L717 403.5L723 403.5L729 403.5L735 403.5L741 403.5L747 403.5L753 403.5L759 403.5L765 403.5L771 403.5L777 403.5L783 403.5L789 403.5L795 403.5L801 403.5L807 403.5L813 403.5L819 403.5L825 403.5L831 403.5L837 403.5L843 404.5L849 404.5L855 405.5L861 405.5L867 405.5L873 406.5L879 406.5L885 407.5L891 407.5L897 408.5L903 408.5L909 408.5L915 409.5L921 409.5L927 409.5L933 409.5L939 409.5L945 409.5L951 409.5L957 409.5L963 409.5L969 409.5L975 409.5L981 409.5L987 409.5L993 409.5L999 409.5L1005 409.5L1011 409.5L1017 409.5L1023 409.5L1029 409.5L1035 409.5L1041 409.5L1047 409.5L1053 409.5L1059 409.5L1065 409.5L1071 409.5L1077 409.5L1083 409.5L1089 409.5L1095 409.5L1101 409.5L1107 409.5L1113 409.5L1119 409.5L1125 409.5L1131 409.5L1137 409.5L1143 409.5L1149 409.5L1155 409.5L1161 409.5L1167 409.5L1173 409.5L1179 409.5L1185 409.5L1191 408.5L1197 408.5L1203 408.5L1209 408.5L1215 408.5L1221 408.5L1227 408.5L1233 408.5L1239 407.5L1245 406.5L1251 406.5L1257 405.5L1263 405.5L1269 404.5L1275 404.5L1281 403.5L1287 403.5L1293 402.5L1299 402.5L1305 402.5L1311 401.5L1317 401.5L1323 401.5L1329 401.5L1335 401.5L1341 401.5L1347 401.5L1353 401.5L1359 401.5L1365 401.5L1371 401.5L1377 401.5L1383 401.5L1389 401.5L1395 401.5L1401 401.5L1407 401.5L1413 401.5L1419 401.5L1425 401.5L1431 401.5L1437 401.5L1443 401.5L1449 401.5L1455 401.5L1461 401.5L1467 401.5L1473 401.5L1479 401.5L1485 401.5L1491 401.5L1494 400.5" stroke="#ff00ff" fill="none"/><path d="M11 396.5L15 396.5L21 396.5L27 396.5L33 396.5L39 396.5L45 396.5L51 396.5L57 396.5L63 396.5L69 396.5L75 396.5L81 396.5L87 396.5L93 396.5L99 396.5L105 396.5L111 396.5L117 396.5L123 395.5L129 394.5L135 394.5L141 394.5L147 393.5L153 393.5L159 392.5L165 392.5L171 392.5L177 392.5L183 392.5L189 392.5L195 392.5L201 391.5L207 390.5L213 390.5L219 389.5L225 389.5L231 389.5L237 389.5L243 389.5L249 388.5L255 388.5L261 388.5L267 388.5L273 388.5L279 387.5L285 387.5L291 387.5L297 387.5L303 387.5L309 387.5L315 387.5L321 387.5L327 386.5L333 386.5L339 386.5L345 386.5L351 385.5L357 385.5L363 385.5L369 385.5L375 385.5L381 385.5L387 384.5L393 384.5L399 384.5L405 384.5L411 383.5L417 383.5L423 383.5L429 383.5L435 382.5L441 382.5L447 382.5L453 382.5L459 382.5L465 382.5L471 382.5L477 382.5L483 381.5L489 381.5L495 381.5L501 381.5L507 380.5L513 380.5L519 380.5L525 380.5L531 380.5L537 380.5L543 380.5L549 380.5L555 380.5L561 380.5L567 380.5L573 380.5L579 380.5L585 380.5L591 380.5L597 380.5L603 380.5L609 380.5L615 381.5L621 381.5L627 381.5L633 381.5L639 382.5L645 382.5L651 382.5L657 382.5L663 382.5L669 382.5L675 382.5L681 382.5L687 382.5L693 382.5L699 382.5L705 382.5L711 382.5L717 382.5L723 382.5L729 382.5L735 382.5L741 382.5L747 382.5L753 382.5L759 382.5L765 382.5L771 382.5L777 382.5L783 382.5L789 382.5L795 382.5L801 382.5L807 382.5L813 382.5L819 382.5L825 382.5L831 382.5L837 382.5L843 382.5L849 382.5L855 382.5L861 383.5L867 383.5L873 383.5L879 383.5L885 384.5L891 384.5L897 384.5L903 384.5L909 384.5L915 384.5L921 384.5L927 384.5L933 384.5L939 384.5L945 384.5L951 384.5L957 384.5L963 384.5L969 384.5L975 384.5L981 384.5L987 384.5L993 384.5L999 384.5L1005 384.5L1011 384.5L1017 383.5L1023 383.5L1029 383.5L1035 383.5L1041 383.5L1047 383.5L1053 383.5L1059 383.5L1065 384.5L1071 383.5L1077 383.5L1083 383.5L1089 383.5L1095 383.5L1101 383.5L1107 383.5L1113 383.5L1119 383.5L1125 383.5L1131 382.5L1137 382.5L1143 382.5L1149 382.5L1155 382.5L1161 382.5L1167 382.5L1173 382.5L1179 382.5L1185 382.5L1191 382.5L1197 382.5L1203 382.5L1209 381.5L1215 381.5L1221 381.5L1227 381.5L1233 380.5L1239 380.5L1245 380.5L1251 380.5L1257 379.5L1263 379.5L1269 379.5L1275 379.5L1281 378.5L1287 378.5L1293 378.5L1299 378.5L1305 378.5L1311 378.5L1317 378.5L1323 378.5L1329 378.5L1335 378.5L1341 377.5L1347 377.5L1353 377.5L1359 376.5L1365 376.5L1371 376.5L1377 376.5L1383 376.5L1389 376.5L1395 376.5L1401 376.5L1407 376.5L1413 375.5L1419 375.5L1425 375.5L1431 374.5L1437 374.5L1443 374.5L1449 374.5L1455 374.5L1461 373.5L1467 373.5L1473 373.5L1479 373.5L1485 373.5L1491 373.5L1494 372.5" stroke="#008000" fill="none"/><path d="M154 305.5H215" stroke="#ff1010"/><path d="M154 344.5H215" stroke="#ff1010"/><path d="M154 383.5H215" stroke="#ff1010"/><path d="M364 394.5H407" stroke="#ff1010"/><path d="M364 426.5H407" stroke="#ff1010"/><path d="M364 459.5H407" stroke="#ff1010"/><path d="M580 386.5H611" stroke="#ff1010"/><path d="M580 411.5H611" stroke="#ff1010"/><path d="M580 436.5H611" stroke="#ff1010"/><path d="M706 347.5H719" stroke="#ff1010"/><path d="M706 362.5H719" stroke="#ff1010"/><path d="M706 378.5H719" stroke="#ff1010"/><path d="M790 343.5H809" stroke="#ff1010"/><path d="M790 360.5H809" stroke="#ff1010"/><path d="M790 377.5H809" stroke="#ff1010"/><path d="M838 387.5H851" stroke="#ff1010"/><path d="M838 408.5H851" stroke="#ff1010"/><path d="M838 428.5H851" stroke="#ff1010"/><path d="M856 392.5H899" stroke="#ff1010"/><path d="M856 428.5H899" stroke="#ff1010"/><path d="M856 463.5H899" stroke="#ff1010"/><path d="M928 326.5H953" stroke="#ff1010"/><path d="M928 352.5H953" stroke="#ff1010"/><path d="M928 377.5H953" stroke="#ff1010"/><path d="M1060 313.5H1109" stroke="#ff1010"/><path d="M1060 344.5H1109" stroke="#ff1010"/><path d="M1060 376.5H1109" stroke="#ff1010"/><path d="M1162 333.5H1265" stroke="#ff1010"/><path d="M1162 354.5H1265" stroke="#ff1010"/><path d="M1162 376.5H1265" stroke="#ff1010"/><path d="M1402 317.5H1487" stroke="#ff1010"/><path d="M1402 364.5H1487" stroke="#ff1010"/><path d="M155.5 276V295" stroke="#ff0000"/><rect x="154" y="279" width="3" height="6" fill="#ff0000"/><path d="M365.5 276V295" stroke="#ff0000"/><rect x="364" y="279" width="3" height="6" fill="#ff0000"/><path d="M581.5 276V295" stroke="#ff0000"/><rect x="580" y="279" width="3" height="6" fill="#ff0000"/><path d="M707.5 276V295" stroke="#ff0000"/><rect x="706" y="279" width="3" height="6" fill="#ff0000"/><path d="M791.5 276V295" stroke="#ff0000"/><rect x="790" y="279" width="3" height="6" fill="#ff0000"/><path d="M839.5 276V295" stroke="#ff0000"/><rect x="838" y="279" width="3" height="6" fill="#ff0000"/><path d="M857.5 276V295" stroke="#ff0000"/><rect x="856" y="279" width="3" height="6" fill="#ff0000"/><path d="M929.5 276V295" stroke="#ff0000"/><rect x="928" y="279" width="3" height="6" fill="#ff0000"/><path d="M1061.5 276V295" stroke="#ff0000"/><rect x="1060" y="279" width="3" height="6" fill="#ff0000"/><path d="M1163.5 276V295" stroke="#ff0000"/><rect x="1162" y="279" width="3" height="6" fill="#ff0000"/><path d="M1403.5 276V295" stroke="#ff0000"/><rect x="1402" y="279" width="3" height="6" fill="#ff0000"/><path d="M215.5 276V295" stroke="#00ff00"/><rect x="214" y="286" width="3" height="6" fill="#00ff00"/><path d="M407.5 276V295" stroke="#00ff00"/><rect x="406" y="286" width="3" height="6" fill="#00ff00"/><path d="M611.5 276V295" stroke="#00ff00"/><rect x="610" y="286" width="3" height="6" fill="#00ff00"/><path d="M719.5 276V295" stroke="#00ff00"/><rect x="718" y="286" width="3" height="6" fill="#00ff00"/><path d="M809.5 276V295" stroke="#00ff00"/><rect x="808" y="286" width="3" height="6" fill="#00ff00"/><path d="M851.5 276V295" stroke="#00ff00"/><rect x="850" y="286" width="3" height="6" fill="#00ff00"/><path d="M899.5 276V295" stroke="#00ff00"/><rect x="898" y="286" width="3" height="6" fill="#00ff00"/><path d="M953.5 276V295" stroke="#00ff00"/><rect x="952" y="286" width="3" height="6" fill="#00ff00"/><path d="M1109.5 276V295" stroke="#00ff00"/><rect x="1108" y="286" width="3" height="6" fill="#00ff00"/><path d="M1265.5 276V295" stroke="#00ff00"/><rect x="1264" y="286" width="3" height="6" fill="#00ff00"/><path d="M1487.5 276V295" stroke="#00ff00"/><rect x="1486" y="286" width="3" height="6" fill="#00ff00"/><rect x="1408" y="75" width="2" height="420" fill="#ff0000"/><rect x="1492" y="75" width="2" height="420" fill="#ff8040"/><path d="M16 84.5H36" stroke="#e01818"/><path d="M266 84.5H286" stroke="#008000"/><path d="M511 84.5H531" stroke="#c8c8c8"/><path d="M621 84.5H641" stroke="#00ff00"/><path d="M16 304.5H36" stroke="#ccdd00"/><path d="M401 304.5H421" stroke="#d09000"/><path d="M511 304.5H531" stroke="#ff00ff"/><path d="M621 304.5H641" stroke="#008000"/></svg>
<span class="t" style="left:40px;top:78.5px;font-size:12px;color:#fff;transform:scaleX(1.0343);">[A]金額</span>
<span class="t" style="left:84px;top:78.5px;font-size:12px;color:#fff;transform:scaleX(0.9853);">(8276 平和堂</span>
<span class="t" style="left:195px;top:78.5px;font-size:12px;color:#fff;transform:scaleX(1.0458);">×200株)</span>
<span class="t" style="left:290px;top:78.5px;font-size:12px;color:#fff;transform:scaleX(1.0496);">[B]金額(8957 東急RE</span>
<span class="t" style="left:443px;top:78.5px;font-size:12px;color:#fff;transform:scaleX(1.1116);">×3株)</span>
<span class="t" style="left:535px;top:78.5px;font-size:12px;color:#fff;transform:scaleX(0.9792);">相関係数</span>
<span class="t" style="left:645px;top:78.5px;font-size:12px;color:#fff;transform:scaleX(0.9881);">相関係数平均値</span>
<span class="t" style="left:17px;top:91.0px;font-size:12px;color:#fff;transform:scaleX(0.9557);">相関係数 1.0</span>
<span class="t" style="left:17px;top:107.0px;font-size:12px;color:#fff;transform:scaleX(0.9557);">相関係数 0.8</span>
<span class="t" style="left:17px;top:134.0px;font-size:12px;color:#fff;transform:scaleX(0.9557);">相関係数 0.5</span>
<span class="t" style="left:17px;top:179.0px;font-size:12px;color:#fff;transform:scaleX(0.9997);">相関係数 0</span>
<span class="t" style="left:1349px;top:89.3px;font-size:12px;color:#fff;transform:scaleX(0.9586);">仕掛:12/26</span>
<span class="t" style="left:1427px;top:106.0px;font-size:12px;color:#fff;transform:scaleX(0.7742);">カーソル:01/21</span>
<span class="t" style="left:21px;top:260.0px;font-size:12px;color:#fff;transform:scaleX(0.9703);">相関係数 0.935 相関係数平均値 0.723 サヤ長期平均変動率 0.7%(計算期間は 20260121 から過去 240日)</span>
<span class="t" style="left:40px;top:298.5px;font-size:12px;color:#fff;transform:scaleX(1.0263);">サヤ(金額B-A)</span>
<span class="t" style="left:425px;top:298.5px;font-size:12px;color:#fff;transform:scaleX(0.6975);">ボリンジャーバンド1</span>
<span class="t" style="left:535px;top:298.5px;font-size:12px;color:#fff;transform:scaleX(0.6975);">ボリンジャーバンド2</span>
<span class="t" style="left:644px;top:298.5px;font-size:12px;color:#fff;transform:scaleX(0.6975);">ボリンジャーバンド2</span>
<span class="t" style="left:725px;top:298.5px;font-size:12px;color:#fff;transform:scaleX(1.0000);">中心</span>
<span class="t" style="left:16px;top:479.3px;font-size:12px;color:#fff;transform:scaleX(0.9524);">サヤ:12,200</span>
<span class="t" style="left:112px;top:479.3px;font-size:12px;color:#fff;transform:scaleX(0.9596);">サヤ長平均:18,761</span>
<span class="t" style="left:241px;top:479.3px;font-size:12px;color:#fff;transform:scaleX(0.9772);">不均衡率:1.52</span>
<span class="t" style="left:331px;top:479.3px;font-size:12px;color:#fff;transform:scaleX(0.9963);">サヤかい離:-6,561</span>
<span class="t" style="left:461px;top:479.3px;font-size:12px;color:#fff;transform:scaleX(1.0030);">サヤかい離率:-0.53</span>
<span class="t" style="left:577px;top:479.3px;font-size:12px;color:#fff;transform:scaleX(1.0216);">サヤσ:15,235</span>
<span class="t" style="left:681px;top:479.3px;font-size:12px;color:#fff;transform:scaleX(1.0797);">対σ倍率:-0.43</span>
<span class="t" style="left:1502px;top:70.0px;font-size:12px;color:#fff;transform:scaleX(0.9084);">100万円</span>
<span class="t" style="left:1502px;top:109.5px;font-size:12px;color:#fff;transform:scaleX(0.9101);">90万円</span>
<span class="t" style="left:1502px;top:149.5px;font-size:12px;color:#fff;transform:scaleX(0.9101);">80万円</span>
<span class="t" style="left:1502px;top:189.5px;font-size:12px;color:#fff;transform:scaleX(0.9101);">70万円</span>
<span class="t" style="left:1502px;top:229.5px;font-size:12px;color:#fff;transform:scaleX(0.9101);">60万円</span>
<span class="t" style="left:1502px;top:269.5px;font-size:12px;color:#fff;transform:scaleX(0.9101);">50万円</span>
<span class="t" style="left:1502px;top:289.5px;font-size:12px;color:#fff;transform:scaleX(0.9124);">8万円</span>
<span class="t" style="left:1502px;top:339.5px;font-size:12px;color:#fff;transform:scaleX(0.9124);">4万円</span>
<span class="t" style="left:1502px;top:389.5px;font-size:12px;color:#fff;transform:scaleX(0.9124);">0万円</span>
<span class="t" style="left:1502px;top:439.5px;font-size:12px;color:#fff;transform:scaleX(0.9806);">-4万円</span>
<span class="t" style="left:1502px;top:489.5px;font-size:12px;color:#fff;transform:scaleX(0.9806);">-8万円</span>
<span class="t" style="left:87px;top:501.0px;font-size:12px;color:#fff;transform:scaleX(0.9070);">02月</span>
<span class="t" style="left:195.5px;top:501.0px;font-size:12px;color:#fff;transform:scaleX(0.9070);">03月</span>
<span class="t" style="left:315.4px;top:501.0px;font-size:12px;color:#fff;transform:scaleX(0.9070);">04月</span>
<span class="t" style="left:441px;top:501.0px;font-size:12px;color:#fff;transform:scaleX(0.9070);">05月</span>
<span class="t" style="left:561px;top:501.0px;font-size:12px;color:#fff;transform:scaleX(0.9070);">06月</span>
<span class="t" style="left:687.5px;top:501.0px;font-size:12px;color:#fff;transform:scaleX(0.9070);">07月</span>
<span class="t" style="left:819.6px;top:501.0px;font-size:12px;color:#fff;transform:scaleX(0.9070);">08月</span>
<span class="t" style="left:939.6px;top:501.0px;font-size:12px;color:#fff;transform:scaleX(0.9070);">09月</span>
<span class="t" style="left:1060px;top:501.0px;font-size:12px;color:#fff;transform:scaleX(0.9070);">10月</span>
<span class="t" style="left:1191.6px;top:501.0px;font-size:12px;color:#fff;transform:scaleX(0.9400);">11月</span>
<span class="t" style="left:1300.7px;top:501.0px;font-size:12px;color:#fff;transform:scaleX(0.9070);">12月</span>
<span class="t" style="left:1431px;top:501.0px;font-size:12px;color:#fff;transform:scaleX(0.9070);">01月</span>
<span class="t" style="left:1431px;top:512.5px;font-size:12px;color:#fff;transform:scaleX(0.9043);">2026年</span>
<span class="t" style="left:30px;top:9.5px;font-size:12px;color:#000;transform:scaleX(0.8556);">さや取り達人 ペアグラフ [8276 平和堂</span>
<span class="t" style="left:270px;top:9.5px;font-size:12px;color:#000;transform:scaleX(0.9524);">×200株] - [8957 東急ＲＥ</span>
<span class="t" style="left:449.6px;top:9.5px;font-size:12px;color:#000;transform:scaleX(0.9650);">×3株]</span>
<span class="t" style="left:27px;top:41.0px;font-size:12px;color:#000;transform:scaleX(0.9583);">売買</span>
<span class="t" style="left:51px;top:41.0px;font-size:12px;color:#000;transform:scaleX(0.5312);">シミュレーション</span>
<span class="t" style="left:115px;top:41.0px;font-size:12px;color:#000;transform:scaleX(0.9583);">期間</span>
<span class="t" style="left:148.5px;top:42.0px;font-size:12px;color:#000;transform:scaleX(0.8803);">20250121</span>
<span class="t" style="left:209px;top:40.0px;font-size:12px;color:#000;transform:scaleX(0.9167);">〜</span>
<span class="t" style="left:229px;top:42.0px;font-size:12px;color:#000;transform:scaleX(0.8803);">20260121</span>
<span class="t" style="left:293.5px;top:41.0px;font-size:12px;color:#000;transform:scaleX(0.6389);">グラフ</span>
<span class="t" style="left:317px;top:41.0px;font-size:12px;color:#000;transform:scaleX(0.9792);">更新</span>
<span class="t" style="left:352px;top:41.0px;font-size:12px;color:#000;transform:scaleX(1.0000);">注文区分</span>
<span class="t" style="left:411px;top:41.0px;font-size:12px;color:#000;transform:scaleX(1.0000);">当日大引け</span>
<span class="t" style="left:504px;top:41.0px;font-size:12px;color:#000;transform:scaleX(1.0139);">売買条件区分</span>
<span class="t" style="left:594px;top:41.0px;font-size:12px;color:#000;transform:scaleX(1.0000);">共通</span>
<span class="t" style="left:648px;top:41.0px;font-size:12px;color:#000;transform:scaleX(0.9583);">秒</span>
<span class="t" style="left:660px;top:41.0px;font-size:12px;color:#000;transform:scaleX(0.6042);">カウント</span>
<span class="t" style="left:713px;top:42.0px;font-size:12px;color:#000;transform:scaleX(0.7477);">7</span>
<span class="t" style="left:747px;top:41.0px;font-size:12px;color:#000;transform:scaleX(1.0000);">拡大</span>
<span class="t" style="left:794px;top:41.0px;font-size:12px;color:#000;transform:scaleX(1.0000);">縮小</span>
<span class="t" style="left:1570px;top:39.0px;font-size:12px;color:#000;transform:scaleX(1.1000);">仕掛け情報</span>
<span class="t" style="left:1569px;top:57.0px;font-size:12px;color:#000;transform:scaleX(0.9444);">年月日</span>
<span class="t" style="left:1624px;top:57.5px;font-size:12px;color:#000;transform:scaleX(0.8915);">20251226</span>
<span class="t" style="left:1706px;top:57.0px;font-size:12px;color:#000;transform:scaleX(1.0000);">寄付</span>
<span class="t" style="left:1601px;top:78.0px;font-size:12px;color:#000;transform:scaleX(1.0262);">[A]平和堂</span>
<span class="t" style="left:1673px;top:78.0px;font-size:12px;color:#000;transform:scaleX(1.0299);">[B]東急RE</span>
<span class="t" style="left:1569px;top:95.0px;font-size:12px;color:#000;transform:scaleX(1.0000);">単価</span>
<span class="t" style="left:1569px;top:111.5px;font-size:12px;color:#000;transform:scaleX(1.0000);">金額</span>
<span class="t" style="left:1638.5px;top:97.0px;font-size:12px;color:#000;transform:scaleX(0.8658);">2,880</span>
<span class="t" style="left:1627px;top:112.0px;font-size:12px;color:#000;transform:scaleX(0.8619);">576,000</span>
<span class="t" style="left:1698px;top:97.0px;font-size:12px;color:#000;transform:scaleX(0.9035);">211,000</span>
<span class="t" style="left:1699px;top:112.0px;font-size:12px;color:#000;transform:scaleX(0.8619);">633,000</span>
<span class="t" style="left:1569px;top:133.5px;font-size:12px;color:#000;transform:scaleX(1.0385);">サヤ(B-A)</span>
<span class="t" style="left:1705.5px;top:131.8px;font-size:12px;color:#000;transform:scaleX(0.8446);">57,000</span>
<span class="t" style="left:1569px;top:151.5px;font-size:12px;color:#000;transform:scaleX(1.0000);">予定利益</span>
<span class="t" style="left:1705.5px;top:147.4px;font-size:12px;color:#000;transform:scaleX(0.8446);">41,093</span>
<span class="t" style="left:1586.5px;top:166.3px;font-size:12px;color:#000;transform:scaleX(1.0224);">[A]</span>
<span class="t" style="left:1699px;top:166.3px;font-size:12px;color:#000;transform:scaleX(0.9542);">[B]</span>
<span class="t" style="left:1602px;top:184.5px;font-size:12px;color:#000;transform:scaleX(1.0000);">買</span>
<span class="t" style="left:1650px;top:184.5px;font-size:12px;color:#000;transform:scaleX(1.0000);">売</span>
<span class="t" style="left:1704px;top:183.5px;font-size:12px;color:#000;transform:scaleX(1.0000);">売</span>
<span class="t" style="left:1578.4px;top:220.4px;font-size:12px;color:#000;transform:scaleX(0.6042);">カーソル</span>
<span class="t" style="left:1608px;top:220.4px;font-size:12px;color:#000;transform:scaleX(0.9583);">から引用</span>
<span class="t" style="left:1692px;top:220.5px;font-size:12px;color:#000;transform:scaleX(1.0000);">設定</span>
<span class="t" style="left:1570px;top:254.5px;font-size:12px;color:#000;transform:scaleX(1.0526);">手仕舞い情報(</span>
<span class="t" style="left:1650px;top:254.5px;font-size:12px;color:#000;transform:scaleX(0.5833);">カーソル</span>
<span class="t" style="left:1678px;top:254.5px;font-size:12px;color:#000;transform:scaleX(1.0000);">情報)</span>
<span class="t" style="left:1569px;top:274.0px;font-size:12px;color:#000;transform:scaleX(0.9444);">年月日</span>
<span class="t" style="left:1633px;top:272.2px;font-size:12px;color:#000;transform:scaleX(0.8897);">20260121</span>
<span class="t" style="left:1707px;top:273.0px;font-size:12px;color:#000;transform:scaleX(1.0000);">寄付</span>
<span class="t" style="left:1601px;top:292.0px;font-size:12px;color:#000;transform:scaleX(1.0262);">[A]平和堂</span>
<span class="t" style="left:1673px;top:292.0px;font-size:12px;color:#000;transform:scaleX(1.0299);">[B]東急RE</span>
<span class="t" style="left:1569px;top:310.5px;font-size:12px;color:#000;transform:scaleX(1.0000);">単価</span>
<span class="t" style="left:1569px;top:327.5px;font-size:12px;color:#000;transform:scaleX(1.0000);">金額</span>
<span class="t" style="left:1638.5px;top:312.0px;font-size:12px;color:#000;transform:scaleX(0.8658);">3,080</span>
<span class="t" style="left:1627px;top:327.8px;font-size:12px;color:#000;transform:scaleX(0.8619);">616,000</span>
<span class="t" style="left:1699px;top:312.0px;font-size:12px;color:#000;transform:scaleX(0.8619);">208,000</span>
<span class="t" style="left:1699px;top:327.8px;font-size:12px;color:#000;transform:scaleX(0.8619);">624,000</span>
<span class="t" style="left:1569px;top:347.5px;font-size:12px;color:#000;transform:scaleX(1.0385);">サヤ(B-A)</span>
<span class="t" style="left:1711.7px;top:348.0px;font-size:12px;color:#000;transform:scaleX(0.8225);">8,000</span>
<span class="t" style="left:1569px;top:367.0px;font-size:12px;color:#000;transform:scaleX(1.0000);">利益</span>
<span class="t" style="left:1649px;top:368.2px;font-size:12px;color:#000;transform:scaleX(0.8582);">49,000</span>
<span class="t" style="left:1706px;top:368.0px;font-size:12px;color:#a0a0a0;transform:scaleX(1.0000);">気配</span>
<span class="t" style="left:1575px;top:404.8px;font-size:12px;color:#000;transform:scaleX(0.9833);">手仕舞保存</span>
<span class="t" style="left:1677px;top:404.8px;font-size:12px;color:#000;transform:scaleX(0.9792);">取引履歴</span>
<span class="t" style="left:1581px;top:436.7px;font-size:12px;color:#000;transform:scaleX(0.9875);">損益内訳</span>
<span class="t" style="left:1666px;top:436.7px;font-size:12px;color:#000;transform:scaleX(0.9062);">分足損益</span>
<span class="t" style="left:1710px;top:436.7px;font-size:12px;color:#000;transform:scaleX(0.7083);">グラフ</span>
<span class="t" style="left:1579px;top:464.7px;font-size:12px;color:#000;transform:scaleX(0.9259);">個別ペア損益グラフ</span>
<span class="t" style="left:1579px;top:487.0px;font-size:12px;color:#000;transform:scaleX(0.9722);">サヤ移</span>
<span class="t" style="left:1579px;top:498.5px;font-size:12px;color:#000;transform:scaleX(0.9722);">動平均</span>
<span class="t" style="left:1624px;top:486.2px;font-size:12px;color:#000;transform:scaleX(1.0000);">短期</span>
<span class="t" style="left:1668.5px;top:489.3px;font-size:12px;color:#000;transform:scaleX(0.6729);">3</span>
<span class="t" style="left:1681px;top:486.2px;font-size:12px;color:#000;transform:scaleX(1.0000);">長期</span>
<span class="t" style="left:1725.5px;top:489.5px;font-size:12px;color:#000;transform:scaleX(0.8487);">240</span>
<span class="t" style="left:1578.5px;top:517.3px;font-size:12px;color:#000;transform:scaleX(0.6583);">ボリンジャ</span>
<span class="t" style="left:1579px;top:529.5px;font-size:12px;color:#000;transform:scaleX(0.7223);">ーバンド1</span>
<span class="t" style="left:1629px;top:518.3px;font-size:12px;color:#000;transform:scaleX(0.9792);">期間</span>
<span class="t" style="left:1675px;top:521.3px;font-size:12px;color:#6d6d6d;transform:scaleX(0.7738);">150</span>
<span class="t" style="left:1699.4px;top:519.3px;font-size:12px;color:#000;transform:scaleX(1.0262);">σ</span>
<span class="t" style="left:1737.5px;top:521.3px;font-size:12px;color:#6d6d6d;transform:scaleX(0.6729);">2</span>
<div style="position:absolute;left:0;top:548px;width:1746px;height:2px;background:#111"></div>
</body></html>
